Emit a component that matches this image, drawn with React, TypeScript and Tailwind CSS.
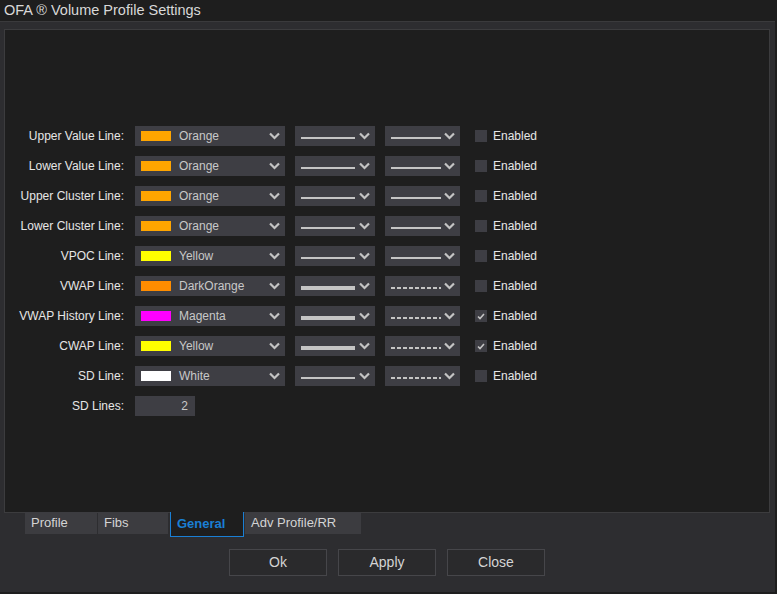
import React from "react";

type Row = {
  label: string;
  color: string;
  name: string;
  thick: boolean;
  dashed: boolean;
  enabled: boolean;
};

const ROWS: Row[] = [
  { label: "Upper Value Line:", color: "#ffa500", name: "Orange", thick: false, dashed: false, enabled: false },
  { label: "Lower Value Line:", color: "#ffa500", name: "Orange", thick: false, dashed: false, enabled: false },
  { label: "Upper Cluster Line:", color: "#ffa500", name: "Orange", thick: false, dashed: false, enabled: false },
  { label: "Lower Cluster Line:", color: "#ffa500", name: "Orange", thick: false, dashed: false, enabled: false },
  { label: "VPOC Line:", color: "#ffff00", name: "Yellow", thick: false, dashed: false, enabled: false },
  { label: "VWAP Line:", color: "#ff8c00", name: "DarkOrange", thick: true, dashed: true, enabled: false },
  { label: "VWAP History Line:", color: "#ff00ff", name: "Magenta", thick: true, dashed: true, enabled: true },
  { label: "CWAP Line:", color: "#ffff00", name: "Yellow", thick: true, dashed: true, enabled: true },
  { label: "SD Line:", color: "#ffffff", name: "White", thick: false, dashed: true, enabled: false },
];

const TABS = ["Profile", "Fibs", "General", "Adv Profile/RR"];

function Chevron() {
  return (
    <svg width="11" height="8" viewBox="0 0 11 8" className="shrink-0">
      <path d="M1 1.5 L5.5 6 L10 1.5" fill="none" stroke="#c4c4c4" strokeWidth="2.2" />
    </svg>
  );
}

function LineSample({ width, thick, dashed }: { width: number; thick: boolean; dashed: boolean }) {
  const h = thick ? 4 : 2;
  return (
    <svg width={width} height="6" className="shrink-0 mt-[3px]">
      <line
        x1="0"
        y1="3"
        x2={width}
        y2="3"
        stroke="#c4c4c4"
        strokeWidth={dashed ? 2 : h}
        strokeDasharray={dashed ? "4 2" : undefined}
      />
    </svg>
  );
}

function SettingRow({ row }: { row: Row }) {
  return (
    <div className="flex items-center h-5">
      <div className="w-[120px] text-right text-[12px] text-[#e6e6e6] pr-px">{row.label}</div>
      <div className="ml-[10px] w-[150px] h-5 bg-[#3e3e44] flex items-center pl-[6px] pr-[5px]">
        <span className="w-[30px] h-[10px] shrink-0" style={{ backgroundColor: row.color }} />
        <span className="ml-2 text-[12px] text-[#c8c8c8] flex-1">{row.name}</span>
        <Chevron />
      </div>
      <div className="ml-[10px] w-[80px] h-5 bg-[#3e3e44] flex items-center pl-[6px] pr-[5px] justify-between">
        <LineSample width={54} thick={row.thick} dashed={false} />
        <Chevron />
      </div>
      <div className="ml-[10px] w-[75px] h-5 bg-[#3e3e44] flex items-center pl-[6px] pr-[5px] justify-between">
        <LineSample width={50} thick={false} dashed={row.dashed} />
        <Chevron />
      </div>
      <div className="ml-[15px] w-3 h-3 bg-[#3e3e44] flex items-center justify-center">
        {row.enabled && (
          <svg width="8" height="7" viewBox="0 0 8 7">
            <path d="M1 3.5 L3 5.5 L7 1" fill="none" stroke="#c4c4c4" strokeWidth="1.6" />
          </svg>
        )}
      </div>
      <span className="ml-[6px] text-[12px] text-[#e6e6e6]">Enabled</span>
    </div>
  );
}

export default function App() {
  return (
    <div
      className="w-[777px] h-[594px] bg-[#2d2d30] flex flex-col overflow-hidden border-r-2 border-b-2 border-[#1e1e1e]"
      style={{ fontFamily: '"Liberation Sans", Arial, sans-serif' }}
    >
      {/* Title bar */}
      <div className="h-[22px] bg-[#1e1e1e] border-b border-[#3a3a3c] flex items-center pl-1 pt-px text-[14.5px] text-[#d8d8d8] shrink-0">
        OFA ® Volume Profile Settings
      </div>

      {/* Settings panel */}
      <div className="ml-1 mt-[7px] w-[766px] h-[484px] bg-[#1e1e1e] border border-[#3c3c3e] pt-[96px] flex flex-col gap-[10px] shrink-0">
        {ROWS.map((r) => (
          <SettingRow key={r.label} row={r} />
        ))}
        <div className="flex items-center h-5">
          <div className="w-[120px] text-right text-[12px] text-[#e6e6e6] pr-px">SD Lines:</div>
          <div className="ml-[10px] w-[60px] h-5 bg-[#3e3e44] flex items-center justify-end pr-[7px] text-[12px] text-[#c8c8c8]">
            2
          </div>
        </div>
      </div>

      {/* Tabs */}
      <div className="flex items-start ml-[25px] -mt-px gap-px">
        {TABS.map((t) =>
          t === "General" ? (
            <div
              key={t}
              className="w-[74px] h-[25px] ml-px bg-[#1e1e1e] border border-[#1a7fd4] border-t-0 flex items-center pl-[6px] text-[13px] font-bold text-[#1a7fd4]"
            >
              {t}
            </div>
          ) : (
            <div
              key={t}
              className={`${t === "Profile" ? "w-[72px]" : t === "Fibs" ? "w-[70px]" : "w-[116px]"} h-[22px] bg-[#3c3c40] flex items-center pl-[6px] text-[13px] text-[#d4d4d4]`}
            >
              {t}
            </div>
          )
        )}
      </div>

      {/* Buttons */}
      <div className="flex ml-[229px] mt-[12px] gap-[11px]">
        {["Ok", "Apply", "Close"].map((b) => (
          <div
            key={b}
            className="w-[98px] h-[27px] bg-[#2a2a2c] border border-[#46464a] flex items-center justify-center text-[14px] text-[#d4d4d4]"
          >
            {b}
          </div>
        ))}
      </div>
    </div>
  );
}
